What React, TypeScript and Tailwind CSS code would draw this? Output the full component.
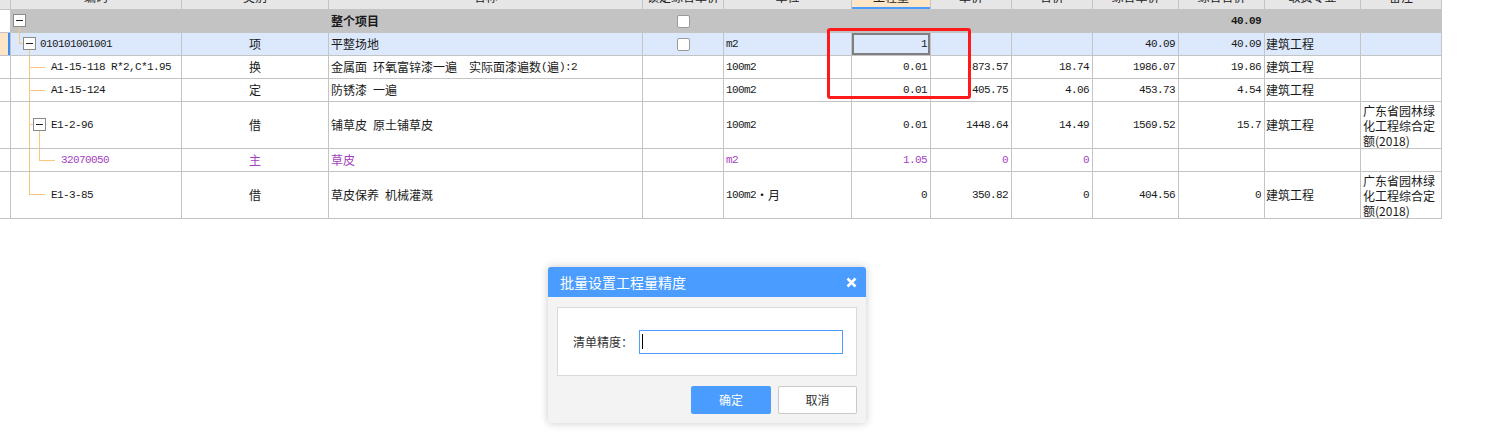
import type { ReactNode } from "react";

// Bill-of-quantities tree grid with the "batch set precision" dialog on top

const GRID =
	"grid grid-cols-[11px_171px_147px_314px_81px_128px_79px_81px_81px_86px_86px_96px_81px]";
const MONO = "font-['Liberation_Mono',monospace] text-[11px] tracking-[-0.6px]";
const LINE = "absolute bg-[#f8c77c]";

// ascii runs get the narrow mono face, everything else stays CJK
function Txt({ s }: { s: string }) {
	const parts = s.split(/([\x20-\x7e]+)/).filter(Boolean);
	return (
		<>
			{parts.map((p, i) =>
				/^[\x20-\x7e]+$/.test(p) ? (
					<span key={i} className={MONO}>
						{p}
					</span>
				) : (
					<span key={i}>{p}</span>
				),
			)}
		</>
	);
}

const Toggle = ({ className }: { className: string }) => (
	<span
		className={`absolute w-[13px] h-[13px] border border-[#8a8a8a] bg-white flex items-center justify-center ${className}`}
	>
		<span className="w-[7px] h-px bg-[#222]" />
	</span>
);

const Check = () => (
	<span className="w-[13px] h-[13px] rounded-[2px] border border-[#9a9a9a] bg-white" />
);

type RowData = {
	tall?: boolean;
	tone: "root" | "sel" | "plain" | "main";
	tree: ReactNode;
	codePad: string;
	code: string;
	kind: string;
	name: string;
	lock?: boolean;
	unit: string;
	qty: string;
	price: string;
	sum: string;
	uPrice: string;
	uSum: string;
	spec: string;
	note: string;
};

const rows: RowData[] = [
	{
		tone: "root",
		tree: (
			<>
				<Toggle className="left-[2px] top-[4px]" />
				<span className={`${LINE} left-[8px] top-[17px] bottom-0 w-px`} />
			</>
		),
		codePad: "pl-[29px]",
		code: "",
		kind: "",
		name: "整个项目",
		lock: true,
		unit: "",
		qty: "",
		price: "",
		sum: "",
		uPrice: "",
		uSum: "40.09",
		spec: "",
		note: "",
	},
	{
		tone: "sel",
		tree: (
			<>
				<span className={`${LINE} left-[8px] top-0 h-[10px] w-px`} />
				<span className={`${LINE} left-[8px] top-[10px] w-[4px] h-px`} />
				<Toggle className="left-[12px] top-[4px]" />
				<span className={`${LINE} left-[18px] top-[17px] bottom-0 w-px`} />
			</>
		),
		codePad: "pl-[29px]",
		code: "010101001001",
		kind: "项",
		name: "平整场地",
		lock: true,
		unit: "m2",
		qty: "1",
		price: "",
		sum: "",
		uPrice: "40.09",
		uSum: "40.09",
		spec: "建筑工程",
		note: "",
	},
	{
		tone: "plain",
		tree: (
			<>
				<span className={`${LINE} left-[18px] top-0 bottom-0 w-px`} />
				<span className={`${LINE} left-[18px] top-[11px] w-[16px] h-px`} />
			</>
		),
		codePad: "pl-[40px]",
		code: "A1-15-118 R*2,C*1.95",
		kind: "换",
		name: "金属面 环氧富锌漆一遍　实际面漆遍数(遍):2",
		unit: "100m2",
		qty: "0.01",
		price: "873.57",
		sum: "18.74",
		uPrice: "1986.07",
		uSum: "19.86",
		spec: "建筑工程",
		note: "",
	},
	{
		tone: "plain",
		tree: (
			<>
				<span className={`${LINE} left-[18px] top-0 bottom-0 w-px`} />
				<span className={`${LINE} left-[18px] top-[11px] w-[16px] h-px`} />
			</>
		),
		codePad: "pl-[40px]",
		code: "A1-15-124",
		kind: "定",
		name: "防锈漆 一遍",
		unit: "100m2",
		qty: "0.01",
		price: "405.75",
		sum: "4.06",
		uPrice: "453.73",
		uSum: "4.54",
		spec: "建筑工程",
		note: "",
	},
	{
		tall: true,
		tone: "plain",
		tree: (
			<>
				<span className={`${LINE} left-[18px] top-0 bottom-0 w-px`} />
				<span className={`${LINE} left-[18px] top-[22px] w-[4px] h-px`} />
				<Toggle className="left-[22px] top-[16px]" />
				<span className={`${LINE} left-[28px] top-[29px] bottom-0 w-px`} />
			</>
		),
		codePad: "pl-[40px]",
		code: "E1-2-96",
		kind: "借",
		name: "铺草皮 原土铺草皮",
		unit: "100m2",
		qty: "0.01",
		price: "1448.64",
		sum: "14.49",
		uPrice: "1569.52",
		uSum: "15.7",
		spec: "建筑工程",
		note: "广东省园林绿化工程综合定额(2018)",
	},
	{
		tone: "main",
		tree: (
			<>
				<span className={`${LINE} left-[18px] top-0 bottom-0 w-px`} />
				<span className={`${LINE} left-[28px] top-0 h-[11px] w-px`} />
				<span className={`${LINE} left-[28px] top-[11px] w-[16px] h-px`} />
			</>
		),
		codePad: "pl-[50px]",
		code: "32070050",
		kind: "主",
		name: "草皮",
		unit: "m2",
		qty: "1.05",
		price: "0",
		sum: "0",
		uPrice: "",
		uSum: "",
		spec: "",
		note: "",
	},
	{
		tall: true,
		tone: "plain",
		tree: (
			<>
				<span className={`${LINE} left-[18px] top-0 h-[23px] w-px`} />
				<span className={`${LINE} left-[18px] top-[22px] w-[16px] h-px`} />
			</>
		),
		codePad: "pl-[40px]",
		code: "E1-3-85",
		kind: "借",
		name: "草皮保养 机械灌溉",
		unit: "100m2・月",
		qty: "0",
		price: "350.82",
		sum: "0",
		uPrice: "404.56",
		uSum: "0",
		spec: "建筑工程",
		note: "广东省园林绿化工程综合定额(2018)",
	},
];

const headers = [
	"",
	"编码",
	"类别",
	"名称",
	"锁定综合单价",
	"单位",
	"工程量",
	"单价",
	"合价",
	"综合单价",
	"综合合价",
	"取费专业",
	"备注",
];

const CELL = "border-r border-[#c4c4c4] flex items-center whitespace-pre overflow-hidden";
const NUM = `${CELL} justify-end pr-[3px]`;

const Row = ({ r }: { r: RowData }) => {
	const bg =
		r.tone === "root" ? "bg-[#c3c3c3]" : r.tone === "sel" ? "bg-[#dce8fb]" : "bg-white";
	const color = r.tone === "main" ? "text-[#a43fc0]" : "text-[#1a1a1a]";
	const lead =
		r.tone === "sel"
			? "bg-[#fde5c7] shadow-[inset_-2px_0_0_#3d8ef0]"
			: "bg-white";
	const strong = r.tone === "root" ? "font-bold" : "";

	return (
		<div
			className={`${GRID} ${r.tall ? "h-[47px]" : "h-[23px]"} border-b border-[#c4c4c4] ${bg} ${color} text-[12px]`}
		>
			<div className={`${CELL} ${lead}`} />
			<div className={`${CELL} relative ${r.codePad}`}>
				{r.tree}
				<Txt s={r.code} />
			</div>
			<div className={`${CELL} justify-center`}>{r.kind}</div>
			<div className={`${CELL} pl-[2px] ${strong}`}>
				<Txt s={r.name} />
			</div>
			<div className={`${CELL} justify-center`}>{r.lock && <Check />}</div>
			<div className={`${CELL} pl-[2px]`}>
				<Txt s={r.unit} />
			</div>
			<div
				className={`${NUM} ${r.tone === "sel" ? "shadow-[inset_0_0_0_2px_#808080]" : ""}`}
			>
				<Txt s={r.qty} />
			</div>
			<div className={NUM}>
				<Txt s={r.price} />
			</div>
			<div className={NUM}>
				<Txt s={r.sum} />
			</div>
			<div className={NUM}>
				<Txt s={r.uPrice} />
			</div>
			<div className={`${NUM} ${strong}`}>
				<Txt s={r.uSum} />
			</div>
			<div className={`${CELL} pl-[1px]`}>{r.spec}</div>
			<div className="border-r border-[#c4c4c4] flex items-center pl-[2px] leading-[15px] overflow-hidden">
				<span>{r.note}</span>
			</div>
		</div>
	);
};

const App = () => {
	return (
		<div className="relative w-[1486px] h-[442px] bg-white overflow-hidden font-['Noto_Sans_CJK_SC','Noto_Sans',sans-serif]">
			<div className="w-[1442px]">
				{/* header row, scrolled so only the bottom of the labels shows */}
				<div className={`${GRID} h-[10px] border-b border-[#c4c4c4] bg-[#e6e6e6] text-[12px] text-[#222]`}>
					{headers.map((h, i) => (
						<div
							key={i}
							className={`border-r border-[#c4c4c4] flex items-end justify-center pb-[6px] overflow-hidden ${
								h === "工程量" ? "bg-[#fde6c8] shadow-[inset_0_-2px_0_#4a9cfe]" : ""
							}`}
						>
							<span className="leading-[12px] shrink-0">{h}</span>
						</div>
					))}
				</div>
				{rows.map((r, i) => (
					<Row key={i} r={r} />
				))}
			</div>

			{/* red highlight drawn over the quantity column */}
			<div className="absolute left-[827px] top-[28px] w-[144px] h-[71px] border-[3px] border-[#fe1a1a] rounded-[3px]" />

			<div className="absolute left-[548px] top-[267px] w-[318px] rounded-[3px] bg-[#f3f3f3] shadow-[0_0_8px_rgba(0,0,0,0.22)] overflow-hidden">
				<div className="h-[30px] bg-[#4a9cfe] flex items-center justify-between pl-[12px] pr-[9px] text-white text-[14px]">
					<span>批量设置工程量精度</span>
					<svg width="11" height="11" viewBox="0 0 11 11">
						<path d="M1.5 1.5 L9.5 9.5 M9.5 1.5 L1.5 9.5" stroke="#fff" strokeWidth="2.6" />
					</svg>
				</div>
				<div className="px-[9px] pt-[10px] pb-[9px]">
					<div className="h-[69px] bg-white border border-[#dadada] flex items-center pl-[15px]">
						<span className="w-[66px] text-[12px] text-[#333]">清单精度：</span>
						<div className="w-[204px] h-[24px] border border-[#4a9cfe] bg-white flex items-center pl-[2px]">
							<span className="w-px h-[15px] bg-black" />
						</div>
					</div>
					<div className="mt-[10px] flex justify-end gap-[7px]">
						<button
							type="button"
							className="w-[80px] h-[28px] rounded-[2px] bg-[#4a9cfe] text-white text-[12px]"
						>
							确定
						</button>
						<button
							type="button"
							className="w-[79px] h-[28px] rounded-[2px] bg-white border border-[#c9c9c9] text-[#333] text-[12px]"
						>
							取消
						</button>
					</div>
				</div>
			</div>
		</div>
	);
};

export default App;
